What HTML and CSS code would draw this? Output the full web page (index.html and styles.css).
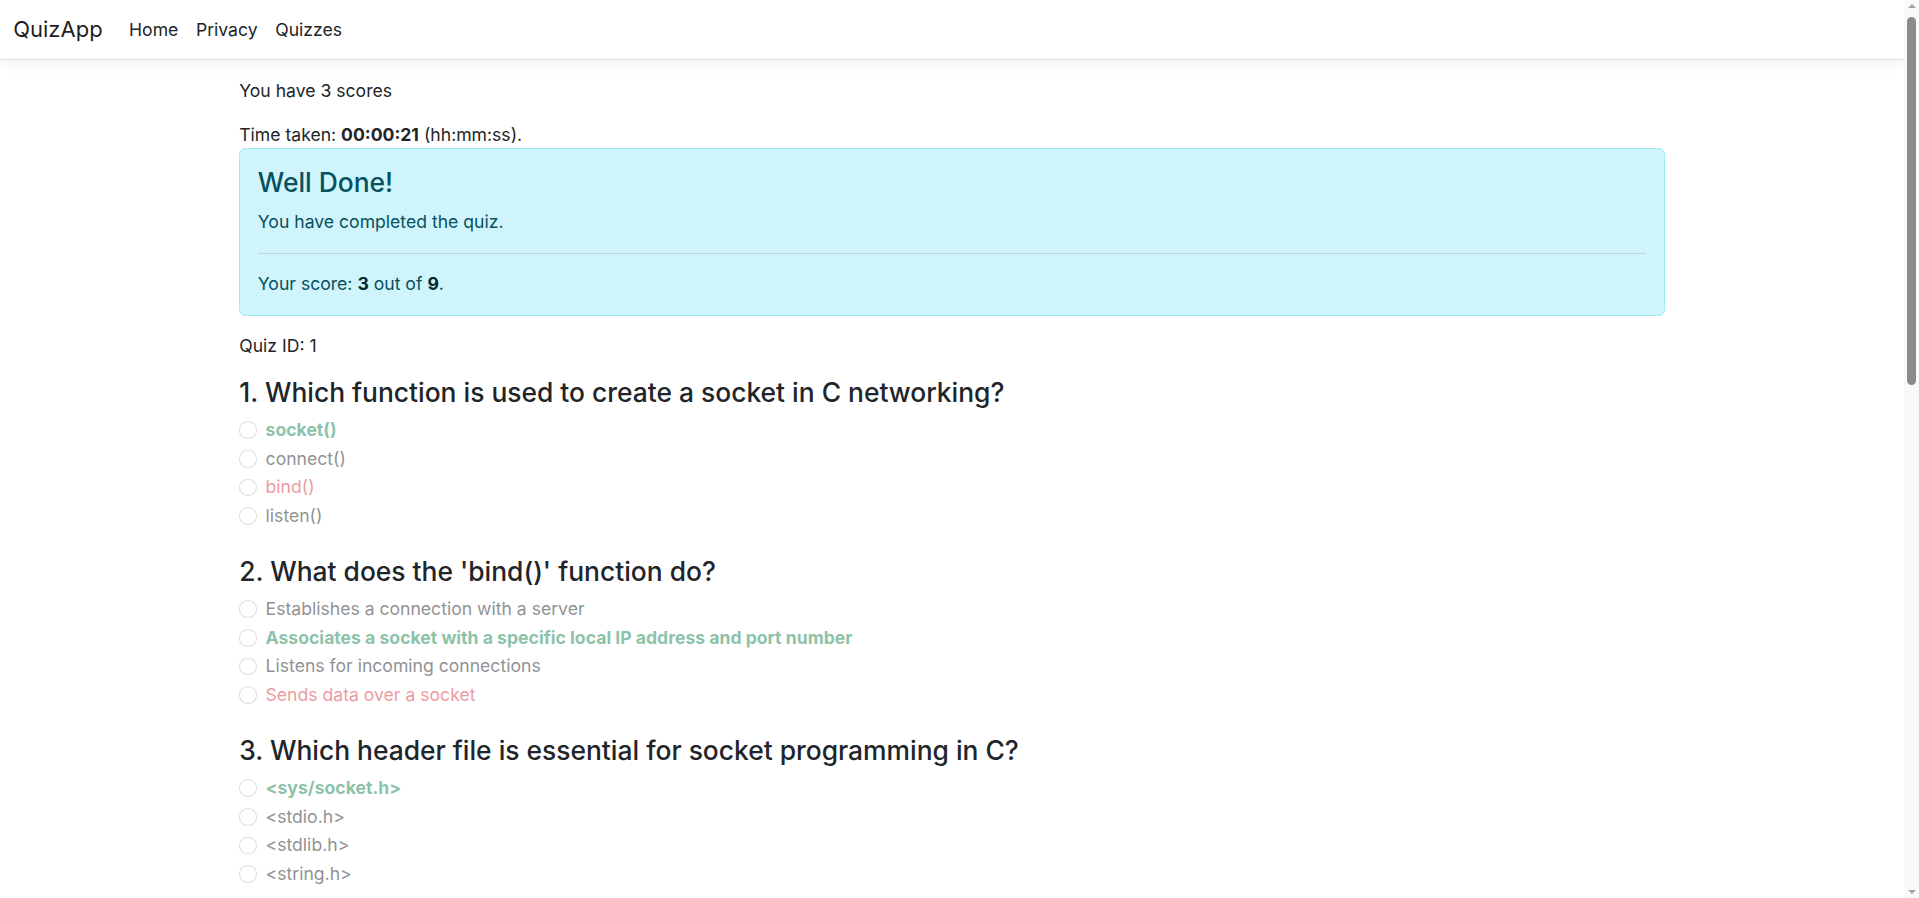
FILE: index.html
```html
<!DOCTYPE html>
<html lang="en">
<head>
<meta charset="utf-8">
<title>Quiz Result - QuizApp</title>
<link rel="stylesheet" href="styles.css">
</head>
<body>
<div class="page">
<div class="zoomed">
<header>
  <nav class="navbar">
    <div class="navbar-inner">
      <a class="brand" href="#">QuizApp</a>
      <ul class="nav">
        <li><a class="nav-link" href="#">Home</a></li>
        <li><a class="nav-link" href="#">Privacy</a></li>
        <li><a class="nav-link" href="#">Quizzes</a></li>
      </ul>
    </div>
  </nav>
</header>
<div class="container">
  <main>
    <p>You have 3 scores</p>
    <p class="time">Time taken: <strong>00:00:21</strong> (hh:mm:ss).</p>
    <div class="alert">
      <h4 class="alert-heading">Well Done!</h4>
      <p>You have completed the quiz.</p>
      <hr>
      <p class="mb-0">Your score: <strong>3</strong> out of <strong>9</strong>.</p>
    </div>
    <p>Quiz ID: 1</p>

    <div class="question">
      <h4>1. Which function is used to create a socket in C networking?</h4>
      <div class="check"><input type="radio" disabled><label class="correct">socket()</label></div>
      <div class="check"><input type="radio" disabled><label>connect()</label></div>
      <div class="check"><input type="radio" disabled><label class="wrong">bind()</label></div>
      <div class="check"><input type="radio" disabled><label>listen()</label></div>
    </div>

    <div class="question">
      <h4>2. What does the 'bind()' function do?</h4>
      <div class="check"><input type="radio" disabled><label>Establishes a connection with a server</label></div>
      <div class="check"><input type="radio" disabled><label class="correct">Associates a socket with a specific local IP address and port number</label></div>
      <div class="check"><input type="radio" disabled><label>Listens for incoming connections</label></div>
      <div class="check"><input type="radio" disabled><label class="wrong">Sends data over a socket</label></div>
    </div>

    <div class="question">
      <h4>3. Which header file is essential for socket programming in C?</h4>
      <div class="check"><input type="radio" disabled><label class="correct">&lt;sys/socket.h&gt;</label></div>
      <div class="check"><input type="radio" disabled><label>&lt;stdio.h&gt;</label></div>
      <div class="check"><input type="radio" disabled><label>&lt;stdlib.h&gt;</label></div>
      <div class="check"><input type="radio" disabled><label>&lt;string.h&gt;</label></div>
    </div>

    <div class="question">
      <h4>4. Which function is used to accept an incoming connection?</h4>
      <div class="check"><input type="radio" disabled><label>listen()</label></div>
      <div class="check"><input type="radio" disabled><label class="correct">accept()</label></div>
      <div class="check"><input type="radio" disabled><label>connect()</label></div>
      <div class="check"><input type="radio" disabled><label class="wrong">recv()</label></div>
    </div>

    <div class="question">
      <h4>5. Which address family is used for IPv4?</h4>
      <div class="check"><input type="radio" disabled><label class="correct">AF_INET</label></div>
      <div class="check"><input type="radio" disabled><label>AF_INET6</label></div>
      <div class="check"><input type="radio" disabled><label>AF_UNIX</label></div>
      <div class="check"><input type="radio" disabled><label>AF_PACKET</label></div>
    </div>

    <div class="question">
      <h4>6. Which socket type provides a reliable byte stream?</h4>
      <div class="check"><input type="radio" disabled><label class="correct">SOCK_STREAM</label></div>
      <div class="check"><input type="radio" disabled><label class="wrong">SOCK_DGRAM</label></div>
      <div class="check"><input type="radio" disabled><label>SOCK_RAW</label></div>
      <div class="check"><input type="radio" disabled><label>SOCK_SEQPACKET</label></div>
    </div>

    <div class="question">
      <h4>7. Which function converts a port number to network byte order?</h4>
      <div class="check"><input type="radio" disabled><label class="correct">htons()</label></div>
      <div class="check"><input type="radio" disabled><label>ntohs()</label></div>
      <div class="check"><input type="radio" disabled><label class="wrong">htonl()</label></div>
      <div class="check"><input type="radio" disabled><label>inet_addr()</label></div>
    </div>

    <div class="question">
      <h4>8. Which function is used to receive data on a connected socket?</h4>
      <div class="check"><input type="radio" disabled><label>send()</label></div>
      <div class="check"><input type="radio" disabled><label class="correct">recv()</label></div>
      <div class="check"><input type="radio" disabled><label>write()</label></div>
      <div class="check"><input type="radio" disabled><label>accept()</label></div>
    </div>

    <div class="question">
      <h4>9. Which function closes a socket descriptor?</h4>
      <div class="check"><input type="radio" disabled><label class="correct">close()</label></div>
      <div class="check"><input type="radio" disabled><label>shutdown()</label></div>
      <div class="check"><input type="radio" disabled><label class="wrong">exit()</label></div>
      <div class="check"><input type="radio" disabled><label>free()</label></div>
    </div>
  </main>
</div>
<footer class="footer">
  <div class="container">&copy; 2024 - QuizApp - <a href="#">Privacy</a></div>
</footer>
</div>
</div>
<div class="scrollbar" aria-hidden="true">
  <span class="sb-arrow sb-up"></span>
  <span class="sb-thumb"></span>
  <span class="sb-spacer"></span>
  <span class="sb-arrow sb-down"></span>
</div>
</body>
</html>
```
FILE: styles.css
```css
*, *::before, *::after {
  box-sizing: border-box;
}

html, body {
  margin: 0;
  padding: 0;
}

body {
  display: flex;
  align-items: flex-start;
  font-family: Inter, "Noto Sans", "Liberation Sans", sans-serif;
  font-size: 16px;
  line-height: 1.5;
  color: #212529;
  background: #fff;
}

.page {
  flex: 1;
  min-width: 0;
}

.zoomed {
  zoom: 1.1;
}

/* window scrollbar, as in the screenshot */
.scrollbar {
  position: sticky;
  top: 0;
  flex: 0 0 15px;
  width: 15px;
  height: 100vh;
  background: #f9f9f9;
  display: flex;
  flex-direction: column;
  align-items: center;
}

.sb-arrow {
  width: 0;
  height: 0;
  border-left: 4px solid transparent;
  border-right: 4px solid transparent;
}

.sb-up {
  margin-top: 4px;
  border-bottom: 4px solid #a3a3a3;
}

.sb-down {
  margin-bottom: 4px;
  border-top: 4px solid #a3a3a3;
}

.sb-thumb {
  margin-top: 9px;
  width: 9px;
  height: 368px;
  border-radius: 5px;
  background: #8b8b8b;
}

.sb-spacer {
  flex: 1;
}

a {
  text-decoration: none;
}

.navbar {
  background: #fff;
  border-bottom: 1px solid #dee2e6;
  box-shadow: 0 4px 12px rgba(0, 0, 0, 0.05);
  margin-bottom: 16px;
}

.navbar-inner {
  display: flex;
  align-items: center;
  padding: 6px 12px;
  height: 54px;
}

.brand {
  font-size: 20px;
  line-height: 30px;
  color: rgba(0, 0, 0, 0.9);
  margin-right: 16px;
}

.nav {
  display: flex;
  list-style: none;
  margin: 0;
  padding: 0;
}

.nav-link {
  display: block;
  padding: 8px 8px;
  color: #212529;
}

.container {
  max-width: 1320px;
  margin: 0 auto;
  padding: 0 12px;
}

p {
  margin: 0 0 16px;
}

.time {
  margin-bottom: 0;
}

strong {
  font-weight: 700;
}

.alert {
  background: #cff4fc;
  border: 1px solid #9eeaf9;
  color: #055160;
  border-radius: 6px;
  padding: 16px;
  margin-bottom: 15px;
}

.alert strong {
  color: #032830;
}

.alert-heading {
  font-size: 24px;
  font-weight: 500;
  line-height: 1.2;
  margin: 0 0 9px;
  color: inherit;
}

.alert hr {
  margin: 16px 0;
  border: 0;
  border-top: 1px solid currentColor;
  opacity: 0.25;
}

.mb-0 {
  margin-bottom: 0;
}

.question {
  margin-bottom: 24px;
}

.question h4 {
  font-size: 24px;
  font-weight: 500;
  line-height: 1.2;
  margin: 0 0 8px;
}

.check {
  display: block;
  min-height: 24px;
  padding-left: 24px;
  margin-bottom: 2px;
}

.check input {
  float: left;
  margin: 4px 0 0 -24px;
  width: 16px;
  height: 16px;
  appearance: none;
  -webkit-appearance: none;
  border: 1px solid rgba(0, 0, 0, 0.25);
  border-radius: 50%;
  background: #fff;
  opacity: 0.5;
}

.check label {
  opacity: 0.5;
}

.check label.correct {
  color: #198754;
  font-weight: 700;
}

.check label.wrong {
  color: #dc3545;
}

.footer {
  border-top: 1px solid #dee2e6;
  color: #6c757d;
  line-height: 60px;
  white-space: nowrap;
  margin-top: 40px;
}

.footer a {
  color: #0d6efd;
}
```
